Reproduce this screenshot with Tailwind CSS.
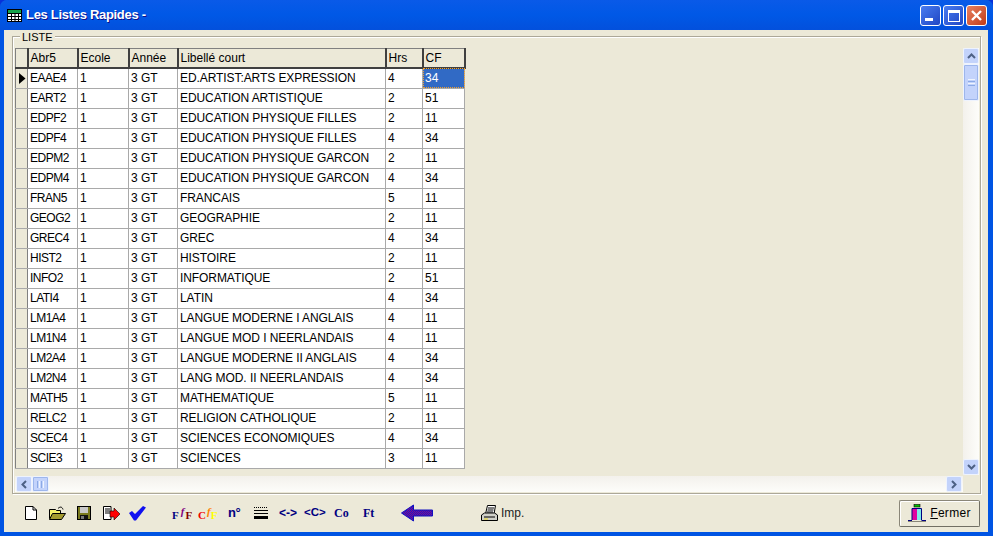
<!DOCTYPE html>
<html lang="fr">
<head>
    <meta charset="UTF-8" />
    <title>Les Listes Rapides</title>
    <script src="https://cdn.jsdelivr.net/npm/@tailwindcss/browser@4"></script>
</head>
<body class="w-[993px] h-[536px] overflow-hidden bg-[#0831d9] font-['Liberation_Sans',sans-serif] text-[12px] text-black">

<!-- Window -->
<div class="w-[993px] h-[536px] flex flex-col rounded-t-[7px] overflow-hidden bg-[#0054e3]">

    <!-- Title bar -->
    <div class="h-[30px] shrink-0 flex items-center pl-[7px] pr-[6px] bg-gradient-to-b from-[#0a5ae8] via-[#0058e6] to-[#0350dc]">
        <svg class="w-[15px] h-[13px] mr-[4px] shrink-0" viewBox="0 0 15 13">
            <rect x="0.5" y="0.5" width="14" height="12" fill="#fff" stroke="#000"/>
            <rect x="1" y="1" width="13" height="3" fill="#16a34a"/>
            <path d="M1 4.5h13M1 7.5h13M1 10.5h13M4.5 4v9M8 4v9M11.5 4v9" stroke="#000" stroke-width="1"/>
        </svg>
        <span class="text-white font-bold text-[13px] tracking-[-0.3px] [text-shadow:1px_1px_0_#0f1089]">Les Listes Rapides -</span>
        <div class="ml-auto mt-[1px] flex gap-[2px]">
            <div class="w-[21px] h-[21px] rounded-[3px] border border-white bg-gradient-to-br from-[#4a7cf0] to-[#2146c4] flex items-end pl-[4px] pb-[4px]">
                <div class="w-[8px] h-[3px] bg-white"></div>
            </div>
            <div class="w-[21px] h-[21px] rounded-[3px] border border-white bg-gradient-to-br from-[#4a7cf0] to-[#2146c4] flex items-center justify-center">
                <div class="w-[12px] h-[12px] border border-white border-t-[3px]"></div>
            </div>
            <div class="w-[21px] h-[21px] rounded-[3px] border border-white bg-gradient-to-br from-[#e8805f] to-[#c23a14] flex items-center justify-center">
                <svg class="w-[13px] h-[13px]" viewBox="0 0 13 13"><path d="M2 2l9 9M11 2l-9 9" stroke="#fff" stroke-width="2.4"/></svg>
            </div>
        </div>
    </div>

    <!-- Client area -->
    <div class="flex-1 min-h-0 ml-[4px] mr-[5px] mb-[4px] bg-[#ece9d8] flex flex-col pl-[8px] pr-[7px] pt-[6px]">

        <!-- LISTE group -->
        <div class="relative h-[458px] shrink-0 border border-[#aca899] shadow-[inset_1px_1px_0_#fff,1px_1px_0_#fff] pl-[2px] pt-[11px] flex flex-col">
            <span class="absolute left-[7px] top-[-6px] bg-[#ece9d8] px-[2px] text-[11px] leading-[12px]">LISTE</span>

            <div class="flex h-[427px] shrink-0">
                <!-- Grid -->
                <div class="w-[948px] overflow-hidden">
                    <table class="border-collapse table-fixed w-[449px]">
                        <thead>
                            <tr class="h-[19px] bg-[#ece9d8] text-left">
                                <th class="w-[12px] p-0 font-normal border-r-2 border-b-2 border-r-[#404040] border-b-[#404040] border-t border-l border-t-[#808080] border-l-[#808080]"></th>
                                <th class="w-[50px] px-[2px] py-0 font-normal border-r-2 border-b-2 border-t border-[#404040] border-t-[#808080]">Abr5</th>
                                <th class="w-[51px] px-[2px] py-0 font-normal border-r-2 border-b-2 border-t border-[#404040] border-t-[#808080]">Ecole</th>
                                <th class="w-[49px] px-[2px] py-0 font-normal border-r-2 border-b-2 border-t border-[#404040] border-t-[#808080]">Année</th>
                                <th class="w-[208px] px-[2px] py-0 font-normal border-r-2 border-b-2 border-t border-[#404040] border-t-[#808080]">Libellé court</th>
                                <th class="w-[37px] px-[2px] py-0 font-normal border-r-2 border-b-2 border-t border-[#404040] border-t-[#808080]">Hrs</th>
                                <th class="w-[42px] px-[2px] py-0 font-normal border-r-2 border-b-2 border-t border-[#404040] border-t-[#808080]">CF</th>
                            </tr>
                        </thead>
                        <tbody id="rows"></tbody>
                    </table>
                </div>
                <!-- Vertical scrollbar -->
                <div class="w-[16px] flex flex-col bg-gradient-to-r from-[#f3f1ec] to-[#fdfdfa]">
                    <div class="h-[16px] shrink-0 rounded-[2px] border border-[#eef3fe] bg-[#c3d3fb] flex items-center justify-center">
                        <svg class="w-[9px] h-[6px]" viewBox="0 0 9 6"><path d="M1 5l3.5-3.5L8 5" fill="none" stroke="#4d6185" stroke-width="2"/></svg>
                    </div>
                    <div class="h-[37px] shrink-0 rounded-[2px] border border-[#eef3fe] outline outline-[#9db6ec] outline-offset-[-2px] bg-[#c3d3fb] flex flex-col items-center justify-center gap-[1px]">
                        <div class="w-[7px] h-px bg-[#eef4fe]"></div><div class="w-[7px] h-px bg-[#8caae6]"></div><div class="w-[7px] h-px bg-[#eef4fe]"></div><div class="w-[7px] h-px bg-[#8caae6]"></div>
                    </div>
                    <div class="flex-1"></div>
                    <div class="h-[16px] shrink-0 rounded-[2px] border border-[#eef3fe] bg-[#c3d3fb] flex items-center justify-center">
                        <svg class="w-[9px] h-[6px]" viewBox="0 0 9 6"><path d="M1 1l3.5 3.5L8 1" fill="none" stroke="#4d6185" stroke-width="2"/></svg>
                    </div>
                </div>
            </div>

            <!-- Horizontal scrollbar -->
            <div class="h-[16px] w-[948px] mt-[1px] flex bg-gradient-to-b from-[#f3f1ec] to-[#fdfdfa] shrink-0 pl-[1px] pr-[1px]">
                <div class="w-[16px] rounded-[2px] border border-[#eef3fe] bg-[#c3d3fb] flex items-center justify-center">
                    <svg class="w-[6px] h-[9px]" viewBox="0 0 6 9"><path d="M5 1L1.5 4.5 5 8" fill="none" stroke="#4d6185" stroke-width="2"/></svg>
                </div>
                <div class="w-[17px] rounded-[2px] border border-[#eef3fe] outline outline-[#9db6ec] outline-offset-[-2px] bg-[#c3d3fb] flex items-center justify-center gap-[1px]">
                    <div class="w-px h-[7px] bg-[#8caae6]"></div><div class="w-px h-[7px] bg-[#eef4fe]"></div><div class="w-px h-[7px] bg-[#8caae6]"></div><div class="w-px h-[7px] bg-[#eef4fe]"></div>
                </div>
                <div class="flex-1"></div>
                <div class="w-[16px] rounded-[2px] border border-[#eef3fe] bg-[#c3d3fb] flex items-center justify-center">
                    <svg class="w-[6px] h-[9px]" viewBox="0 0 6 9"><path d="M1 1l3.5 3.5L1 8" fill="none" stroke="#4d6185" stroke-width="2"/></svg>
                </div>
            </div>
        </div>

        <!-- Toolbar -->
        <div class="flex-1 flex items-center pl-[13px] pr-[1px] whitespace-nowrap [&>*]:shrink-0">
            <svg class="w-[12px] h-[14px]" viewBox="0 0 12 14"><path d="M.5.5H8L11.5 4v9.5H.5z" fill="#fff" stroke="#000"/><path d="M8 .5V4h3.5" fill="none" stroke="#000"/></svg>
            <svg class="w-[17px] h-[14px] ml-[12px]" viewBox="0 0 17 14"><path d="M.5 3.5h6l1 1h4v8H.5z" fill="#f5f06a" stroke="#000"/><path d="M.5 13.5l3-6h13l-4 6z" fill="#a39a2e" stroke="#000"/><path d="M9 2.5c2-2 4-2 5 1" fill="none" stroke="#000"/></svg>
            <svg class="w-[14px] h-[14px] ml-[11px]" viewBox="0 0 14 14"><rect x=".5" y=".5" width="13" height="13" fill="#7a7a1e" stroke="#000"/><rect x="3" y="1" width="8" height="6" fill="#c8c8c8"/><rect x="3" y="9" width="8" height="4.5" fill="#111"/><rect x="4" y="10" width="3" height="3" fill="#777"/></svg>
            <svg class="w-[17px] h-[15px] ml-[12px]" viewBox="0 0 17 15"><path d="M.5.5H8v13H.5z" fill="#fff" stroke="#000"/><path d="M2 3h5M2 5h5M2 7h5" stroke="#000"/><path d="M7 5h4V2l6 6-6 6v-3H7z" fill="#f00" stroke="#000" stroke-width=".6"/></svg>
            <svg class="w-[17px] h-[16px] ml-[9px]" viewBox="0 0 17 16"><path d="M0 8l3-2 3 3 8-8 3 1.500L7 15.500H5z" fill="#1010f0"/></svg>

            <div class="flex items-end w-[20px] h-[14px] ml-[26px] font-bold leading-none text-[11px] font-['Liberation_Serif',serif]">
                <span class="text-[#000080] mb-[-1px] mr-[2px]">F</span><span class="text-[#800080] self-start italic mr-[1px]">f</span><span class="text-[#800000] mb-[-1px]">F</span>
            </div>
            <div class="flex items-end w-[19px] h-[14px] ml-[6px] font-bold leading-none text-[11px] font-['Liberation_Serif',serif]">
                <span class="text-[#f00000] mb-[-1px] mr-[1px]">C</span><span class="text-[#ff8000] self-start italic">f</span><span class="text-[#ffff00] mb-[-1px]">F</span>
            </div>
            <span class="ml-[11px] w-[12px] text-[#000080] font-bold text-[13px] tracking-[-0.5px]">n°</span>
            <svg class="w-[14px] h-[13px] ml-[14px]" viewBox="0 0 14 13"><path d="M0 .5h14" stroke="#000" stroke-dasharray="1 1"/><path d="M0 3.5h14M0 6.5h14" stroke="#000"/><rect y="9" width="14" height="3" fill="#000"/></svg>
            <span class="ml-[11px] w-[18px] text-[#000080] font-bold text-[12px]">&lt;-&gt;</span>
            <span class="ml-[7px] w-[22px] text-[#000080] font-bold text-[11.5px]">&lt;C&gt;</span>
            <span class="ml-[8px] w-[15px] text-[#000080] font-bold text-[12px] font-['Liberation_Serif',serif]">Co</span>
            <span class="ml-[14px] w-[11px] text-[#000080] font-bold text-[12px] font-['Liberation_Serif',serif]">Ft</span>
            <svg class="w-[32px] h-[18px] ml-[27px]" viewBox="0 0 32 18">
                <defs>
                    <pattern id="dither" width="2" height="2" patternUnits="userSpaceOnUse">
                        <rect width="2" height="2" fill="#1414d0"/><rect width="1" height="1" fill="#8a1080"/><rect x="1" y="1" width="1" height="1" fill="#8a1080"/>
                    </pattern>
                </defs>
                <path d="M.5 9L12.500 1v5h19v6h-19v5z" fill="url(#dither)" stroke="#1010c0"/>
            </svg>
            <svg class="w-[17px] h-[16px] ml-[48px]" viewBox="0 0 17 16"><path d="M4.500 9l2-8.500h8L13 9" fill="#fff" stroke="#000"/><path d="M7 3h6M6.500 5h6M6 7h6" stroke="#000"/><path d="M.5 15.500V10l3-2h10l3 2v5.500z" fill="#d0d0c8" stroke="#000"/><path d="M3 12h11" stroke="#000"/><path d="M3 14h4" stroke="#e8d820"/></svg>
            <span class="ml-[3px] text-[12px] text-[#222]">Imp.</span>

            <button class="ml-auto w-[81px] h-[27px] rounded-[2px] border border-[#8a8678] border-r-[#716f64] border-b-[#716f64] shadow-[inset_1px_1px_0_#fff] bg-[#ece9d8] flex items-center justify-center gap-[4px] text-[12px]">
                <svg class="w-[18px] h-[18px]" viewBox="0 0 18 18">
                    <rect x="6" y="0.500" width="6" height="2.500" fill="#00c000" stroke="#000" stroke-width=".6"/>
                    <rect x="4" y="4" width="5" height="12" fill="#e000a0"/>
                    <rect x="9" y="4" width="4" height="12" fill="#7fe8e8"/>
                    <path d="M4 16V4.500h9.500V16" fill="none" stroke="#000080" stroke-width="1"/>
                    <path d="M0 16.500h4M13.500 16.500H18" stroke="#000080"/>
                    <path d="M0 17.500h18" stroke="#8a8678"/>
                </svg>
                <span class="tracking-[0.3px]"><span class="underline">F</span>ermer</span>
            </button>
        </div>
    </div>
</div>

<script>
    const data = [
        ["EAAE4","ED.ARTIST:ARTS EXPRESSION","4","34"],
        ["EART2","EDUCATION ARTISTIQUE","2","51"],
        ["EDPF2","EDUCATION PHYSIQUE FILLES","2","11"],
        ["EDPF4","EDUCATION PHYSIQUE FILLES","4","34"],
        ["EDPM2","EDUCATION PHYSIQUE GARCON","2","11"],
        ["EDPM4","EDUCATION PHYSIQUE GARCON","4","34"],
        ["FRAN5","FRANCAIS","5","11"],
        ["GEOG2","GEOGRAPHIE","2","11"],
        ["GREC4","GREC","4","34"],
        ["HIST2","HISTOIRE","2","11"],
        ["INFO2","INFORMATIQUE","2","51"],
        ["LATI4","LATIN","4","34"],
        ["LM1A4","LANGUE MODERNE I ANGLAIS","4","11"],
        ["LM1N4","LANGUE MOD I NEERLANDAIS","4","11"],
        ["LM2A4","LANGUE MODERNE II ANGLAIS","4","34"],
        ["LM2N4","LANG MOD. II NEERLANDAIS","4","34"],
        ["MATH5","MATHEMATIQUE","5","11"],
        ["RELC2","RELIGION CATHOLIQUE","2","11"],
        ["SCEC4","SCIENCES ECONOMIQUES","4","34"],
        ["SCIE3","SCIENCES","3","11"]
    ];
    const td = "px-[2px] py-0 bg-white border-r border-b border-[#a9a9a9] whitespace-nowrap overflow-hidden";
    document.getElementById("rows").innerHTML = data.map((r, i) => `
        <tr class="h-[20px]">
            <td class="p-0 bg-[#ece9d8] border-l border-r border-b border-l-[#808080] border-r-[#808080] border-b-[#a9a9a9]">${i === 0 ? '<svg class="w-[7px] h-[11px] ml-[3px]" viewBox="0 0 7 11"><path d="M0 0l6.5 5.5L0 11z" fill="#000"/></svg>' : ''}</td>
            <td class="${td} tracking-[-0.5px]">${r[0]}</td>
            <td class="${td}">1</td>
            <td class="${td}">3 GT</td>
            <td class="${td} tracking-[-0.08px]">${r[1]}</td>
            <td class="${td}">${r[2]}</td>
            ${i === 0
                ? `<td class="px-[2px] py-0 border-r border-b border-[#a9a9a9] bg-[#316ac5] text-white outline-1 outline-dotted outline-offset-[-1px] outline-[#f0a030]">${r[3]}</td>`
                : `<td class="${td}">${r[3]}</td>`}
        </tr>`).join("");
</script>
</body>
</html>
